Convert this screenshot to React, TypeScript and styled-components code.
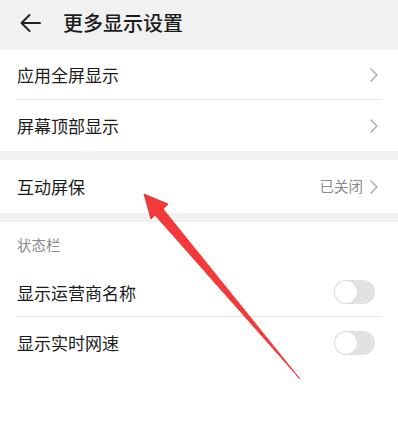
import React from "react";
import styled, { createGlobalStyle } from "styled-components";

const Global = createGlobalStyle`
  html, body { margin: 0; padding: 0; background: #ffffff; }
  body { font-family: "Noto Sans CJK SC", "Noto Sans", sans-serif; }
`;

const Page = styled.div`
  position: relative;
  width: 398px;
  height: 429px;
  background: #ffffff;
  overflow: hidden;
`;

const Header = styled.div`
  height: 50px;
  background: #f1f1f1;
  display: flex;
  align-items: center;
  padding-left: 19px;
  gap: 21px;
`;

const Title = styled.div`
  font-size: 20px;
  font-weight: 500;
  color: #1b1b1b;
  line-height: 1;
  margin-top: -4px;
`;

const BackIcon = styled.svg`
  width: 23px;
  height: 20px;
  margin-top: -4px;
`;

const Gap = styled.div`
  height: 9px;
  background: #f1f1f1;
`;

const Section = styled.div`
  background: #ffffff;
  display: flex;
  flex-direction: column;
`;

const Row = styled.div<{ $h: number; $divider?: boolean }>`
  height: ${(p) => p.$h}px;
  margin: 0 17px;
  display: flex;
  align-items: center;
  justify-content: space-between;
  border-bottom: ${(p) => (p.$divider ? "1px solid #e4e4e4" : "none")};
  box-sizing: border-box;
`;

const Label = styled.div`
  font-size: 17px;
  color: #1b1b1b;
  line-height: 1;
`;

const SubHeader = styled.div`
  height: 46px;
  padding-left: 17px;
  display: flex;
  align-items: center;
  font-size: 14.5px;
  color: #8a8a8a;
  line-height: 1;
`;

const Trail = styled.div`
  display: flex;
  align-items: center;
  gap: 7px;
  margin-right: 3px;
`;

const Value = styled.span`
  font-size: 14.5px;
  color: #8a8a8a;
  line-height: 1;
`;

const ChevronSvg = styled.svg`
  width: 8px;
  height: 14px;
`;

const Toggle = styled.div`
  width: 41px;
  height: 24px;
  border-radius: 12px;
  background: #e2e2e2;
  box-sizing: border-box;
  padding: 1px;
  margin-right: 6px;
  display: flex;
  align-items: center;
`;

const Knob = styled.div`
  width: 22px;
  height: 22px;
  border-radius: 50%;
  background: #ffffff;
  box-shadow: 0 0 0 0.5px #d6d6d6;
`;

const Annotation = styled.svg`
  position: absolute;
  left: 0;
  top: 0;
  width: 398px;
  height: 429px;
  pointer-events: none;
`;

const Chevron = () => (
  <ChevronSvg viewBox="0 0 8 14">
    <path d="M1 1 L7 7 L1 13" fill="none" stroke="#a9a9a9" strokeWidth="1.4" strokeLinecap="round" strokeLinejoin="round" />
  </ChevronSvg>
);

export default function App() {
  return (
    <Page>
      <Global />
      <Header>
        <BackIcon viewBox="0 0 23 20">
          <path d="M21 10 H2.5 M10.5 2 L2.5 10 L10.5 18" fill="none" stroke="#222" strokeWidth="2" strokeLinecap="round" strokeLinejoin="round" />
        </BackIcon>
        <Title>更多显示设置</Title>
      </Header>
      <Section>
        <Row $h={50} $divider>
          <Label>应用全屏显示</Label>
          <Trail><Chevron /></Trail>
        </Row>
        <Row $h={51}>
          <Label>屏幕顶部显示</Label>
          <Trail><Chevron /></Trail>
        </Row>
      </Section>
      <Gap />
      <Section>
        <Row $h={53}>
          <Label>互动屏保</Label>
          <Trail>
            <Value>已关闭</Value>
            <Chevron />
          </Trail>
        </Row>
      </Section>
      <Gap />
      <Section>
        <SubHeader>状态栏</SubHeader>
        <Row $h={49} $divider>
          <Label>显示运营商名称</Label>
          <Toggle><Knob /></Toggle>
        </Row>
        <Row $h={51}>
          <Label>显示实时网速</Label>
          <Toggle><Knob /></Toggle>
        </Row>
      </Section>
      <Annotation viewBox="0 0 398 429">
        <polygon
          points="144,194 168,204 163,209 300,379 155,215 151,219"
          fill="#f23a3a"
          stroke="#f23a3a"
          strokeWidth="1"
          strokeLinejoin="round"
        />
      </Annotation>
    </Page>
  );
}
